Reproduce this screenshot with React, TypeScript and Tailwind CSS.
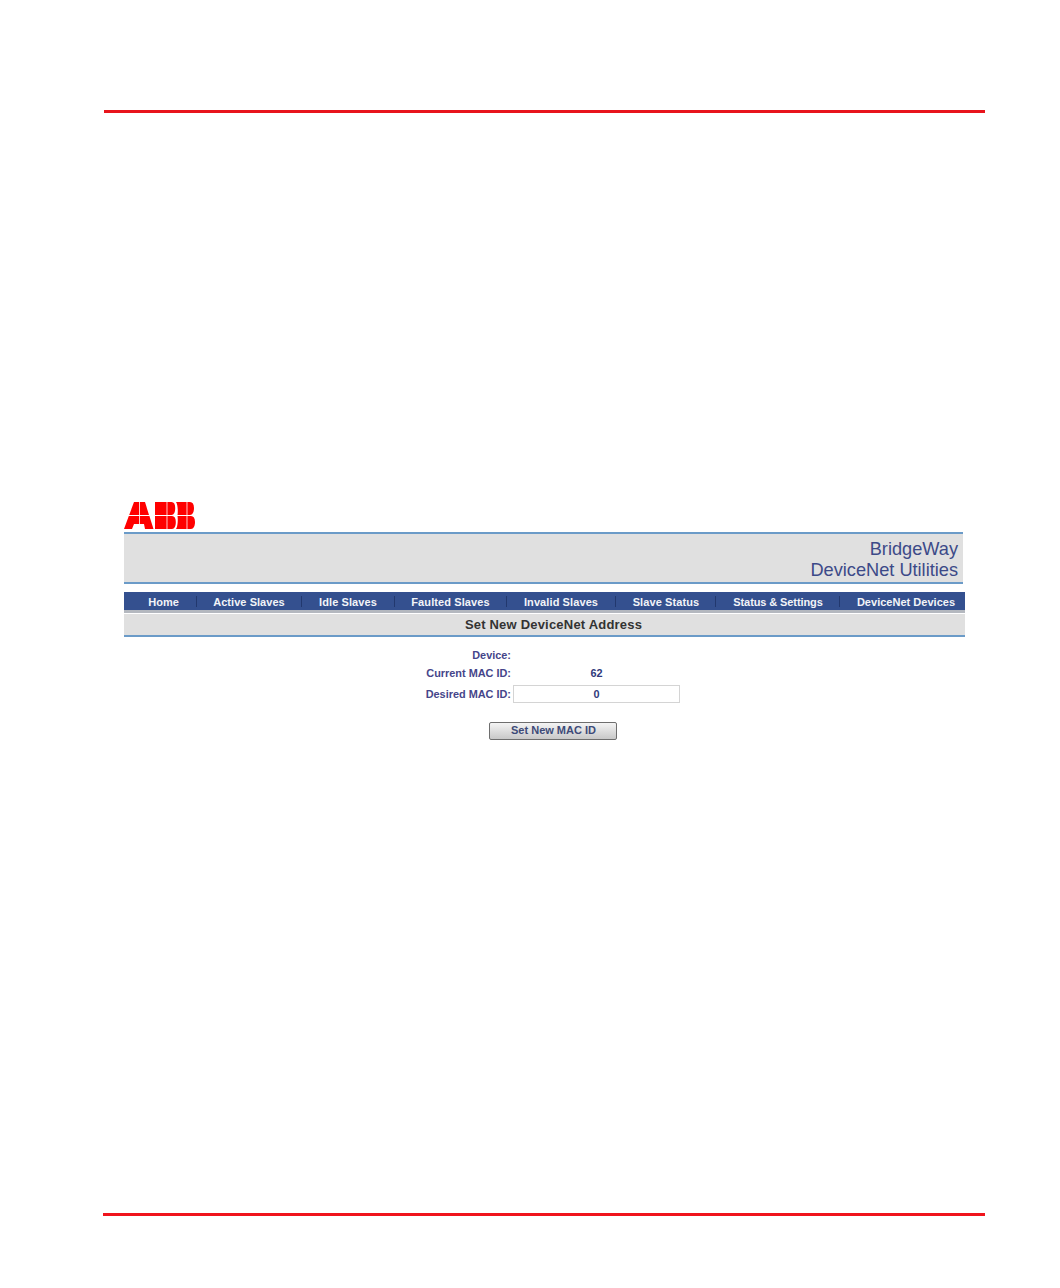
const navItems = [
  { label: 'Home', cell: 'w-[66px] border-r' },
  { label: 'Active Slaves', cell: 'w-[105px] border-r tracking-[0.05px]' },
  { label: 'Idle Slaves', cell: 'w-[93px] border-r tracking-[0.1px]' },
  { label: 'Faulted Slaves', cell: 'w-[112px] border-r tracking-[0.1px]' },
  { label: 'Invalid Slaves', cell: 'w-[109px] border-r tracking-[0.1px]' },
  { label: 'Slave Status', cell: 'w-[100px] border-r pl-[1px] tracking-[0.1px]' },
  { label: 'Status & Settings', cell: 'w-[124px] border-r pl-[1px] tracking-[-0.1px]' },
  { label: 'DeviceNet Devices', cell: 'w-[125px] pl-[7px] tracking-[0.02px]' },
];

const AbbLogo = () => (
  <svg width="71" height="27" viewBox="0 0 71 27" className="block">
    <g fill="#ff0000">
      {/* A */}
      <path d="M10 0 H15.2 V13 H5.2 Z" />
      <path d="M16 0 H21 L25 13 H16 Z" />
      <path d="M4.8 14 H15.2 V22 H10 L8 27 H0 Z" />
      <path d="M16 14 H25.4 L29.5 27 H21 L20 22 H16 Z" />
      {/* B */}
      <path d="M31 0 H42.6 V13 H31 Z" />
      <path d="M43.4 0 H47.5 C50 0 51.2 2 51.2 6 C51.2 10 50 13 47.5 13 H43.4 Z" />
      <path d="M31 14 H42.6 V27 H31 Z" />
      <path d="M43.4 14 H48 C50.5 14 51.8 16 51.8 20 C51.8 24 50.5 27 48 27 H43.4 Z" />
      {/* B */}
      <path d="M52 0 H62.6 V13 H53.5 C54 10 54 3 52 0 Z" />
      <path d="M63.4 0 H66 C68.5 0 70 2 70 6 C70 10 68.5 13 66 13 H63.4 Z" />
      <path d="M53.5 14 H62.6 V27 H52 C54 24 54 17 53.5 14 Z" />
      <path d="M63.4 14 H67 C69.5 14 71 16 71 20 C71 24 69.5 27 67 27 H63.4 Z" />
    </g>
  </svg>
);

const App = () => {
  return (
    <div className="w-[1060px] h-[1288px] bg-white flex flex-col font-['Liberation_Sans',Arial,sans-serif] overflow-hidden">
      <div className="mt-[110px] ml-[104px] w-[881px] h-[3px] bg-[#e8141c]" />

      <div className="mt-[389px] ml-[124px] w-[841px] flex flex-col">
        <AbbLogo />

        <div className="mt-[3px] w-[839px] h-[52px] bg-[#e0e0e0] border-y-2 border-[#6b9bc8] flex flex-col items-end pr-[5px] pt-[5px] text-[18.2px] leading-[20.5px] text-[#3c4a88]">
          <div>BridgeWay</div>
          <div>DeviceNet Utilities</div>
        </div>

        <div className="mt-[8px] h-[18px] bg-[#34508f] flex items-center pl-[7px] text-[11px] font-bold text-[#f2f4f8] whitespace-nowrap">
          {navItems.map(item => (
            <div key={item.label} className={`h-[11px] leading-[12px] text-center border-[#22386e] ${item.cell}`}>
              {item.label}
            </div>
          ))}
        </div>
        <div className="h-[3px] bg-[#b4b8bf]" />

        <div className="mt-[1px] h-[23px] bg-[#e0e0e0] border-b-2 border-[#6b9bc8] flex items-center justify-center pl-[18px] text-[13px] font-bold tracking-[0.2px] text-[#333333]">
          Set New DeviceNet Address
        </div>

        <div className="mt-[11px] ml-[280px] grid grid-cols-[107px_167px] gap-x-[2px] text-[10.9px] font-bold text-[#45458a] items-center">
          <div className="text-right h-[14px] leading-[14px]">Device:</div>
          <div className="h-[14px]" />
          <div className="mt-[4px] text-right h-[14px] leading-[14px]">Current MAC ID:</div>
          <div className="mt-[4px] h-[14px] leading-[14px] text-center text-[#2f3a7c]">62</div>
          <div className="mt-[5px] text-right h-[18px] leading-[18px]">Desired MAC ID:</div>
          <div className="mt-[5px] h-[18px] bg-white border border-[#d4d4d4] flex items-center justify-center text-[#2f3a7c]">
            0
          </div>
        </div>

        <button className="mt-[19px] ml-[365px] w-[128px] h-[18px] rounded-[2px] border border-[#6e6e6e] bg-gradient-to-b from-[#f4f4f4] to-[#c8c8c8] flex items-center justify-center pb-[1px] pl-[1px] text-[11px] font-bold text-[#3d4a78]">
          Set New MAC ID
        </button>
      </div>

      <div className="mt-auto mb-[72px] ml-[103px] w-[882px] h-[3px] bg-[#f0141c]" />
    </div>
  );
};

export default App;
